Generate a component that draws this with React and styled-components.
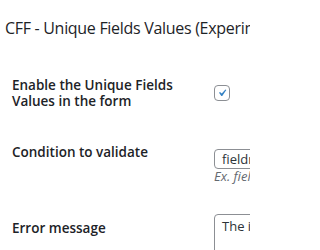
import styled, { createGlobalStyle } from "styled-components"

const GlobalStyle = createGlobalStyle`
  body {
    margin: 0;
    background: #ffffff;
    overflow: hidden;
    font-family: "Open Sans", "Noto Sans", sans-serif;
    color: #1d2327;
  }
`

const Wrap = styled.div`
  width: 250px;
  height: 250px;
  overflow: hidden;
  padding: 17px 0 0 5px;
  box-sizing: border-box;
`

const Title = styled.h2`
  margin: 0;
  font-size: 16px;
  font-weight: 400;
  line-height: 22px;
  letter-spacing: -0.3px;
  white-space: nowrap;
`

const FormTable = styled.div`
  display: grid;
  grid-template-columns: 202px 1fr;
  padding-left: 7px;
  margin-top: 38px;
`

const Label = styled.div`
  font-size: 13.5px;
  font-weight: 600;
  line-height: 16px;
  padding-top: ${(p) => p.top}px;
  height: ${(p) => p.h}px;
  box-sizing: border-box;
  white-space: nowrap;
`

const Cell = styled.div`
  padding-top: ${(p) => p.top}px;
  height: ${(p) => p.h}px;
  box-sizing: border-box;
  white-space: nowrap;
`

const Check = styled.span`
  display: flex;
  align-items: center;
  justify-content: center;
  width: 16px;
  height: 16px;
  box-sizing: border-box;
  border: 1px solid #8c8f94;
  border-radius: 4px;
  background: #fff;
  svg {
    width: 16px;
    height: 16px;
  }
`

const Input = styled.div`
  width: 200px;
  height: 20px;
  box-sizing: border-box;
  border: 1px solid #8c8f94;
  border-radius: 4px;
  padding: 0 7px;
  font-size: 13px;
  line-height: 18px;
  color: #2c3338;
`

const Description = styled.p`
  margin: 0;
  font-size: 13px;
  font-style: italic;
  line-height: 15px;
  color: #646970;
`

const TextArea = styled.div`
  width: 200px;
  height: 60px;
  box-sizing: border-box;
  border: 1px solid #8c8f94;
  border-radius: 4px;
  padding: 2px 7px;
  font-size: 13px;
  line-height: 18px;
  color: #2c3338;
`

export default function App() {
  return (
    <>
      <GlobalStyle />
      <Wrap>
        <Title>CFF - Unique Fields Values (Experimental)</Title>

        <FormTable>
          <Label top={0} h={67}>
            Enable the Unique Fields
            <br />
            Values in the form
          </Label>
          <Cell top={8} h={67}>
            <Check>
              <svg viewBox="0 0 20 20">
                <path d="M14.83 4.89l1.34.94-5.81 8.38H9.02L5.78 9.67l1.34-1.25 2.57 2.4z" fill="#3582c4" />
              </svg>
            </Check>
          </Cell>

          <Label top={0} h={61}>Condition to validate</Label>
          <Cell top={5} h={61}>
            <Input>fieldname1</Input>
            <Description>Ex. fieldname1</Description>
          </Cell>

          <Label top={15} h={60}>Error message</Label>
          <Cell top={9} h={60}>
            <TextArea>The inserted value already exists</TextArea>
          </Cell>
        </FormTable>
      </Wrap>
    </>
  )
}
